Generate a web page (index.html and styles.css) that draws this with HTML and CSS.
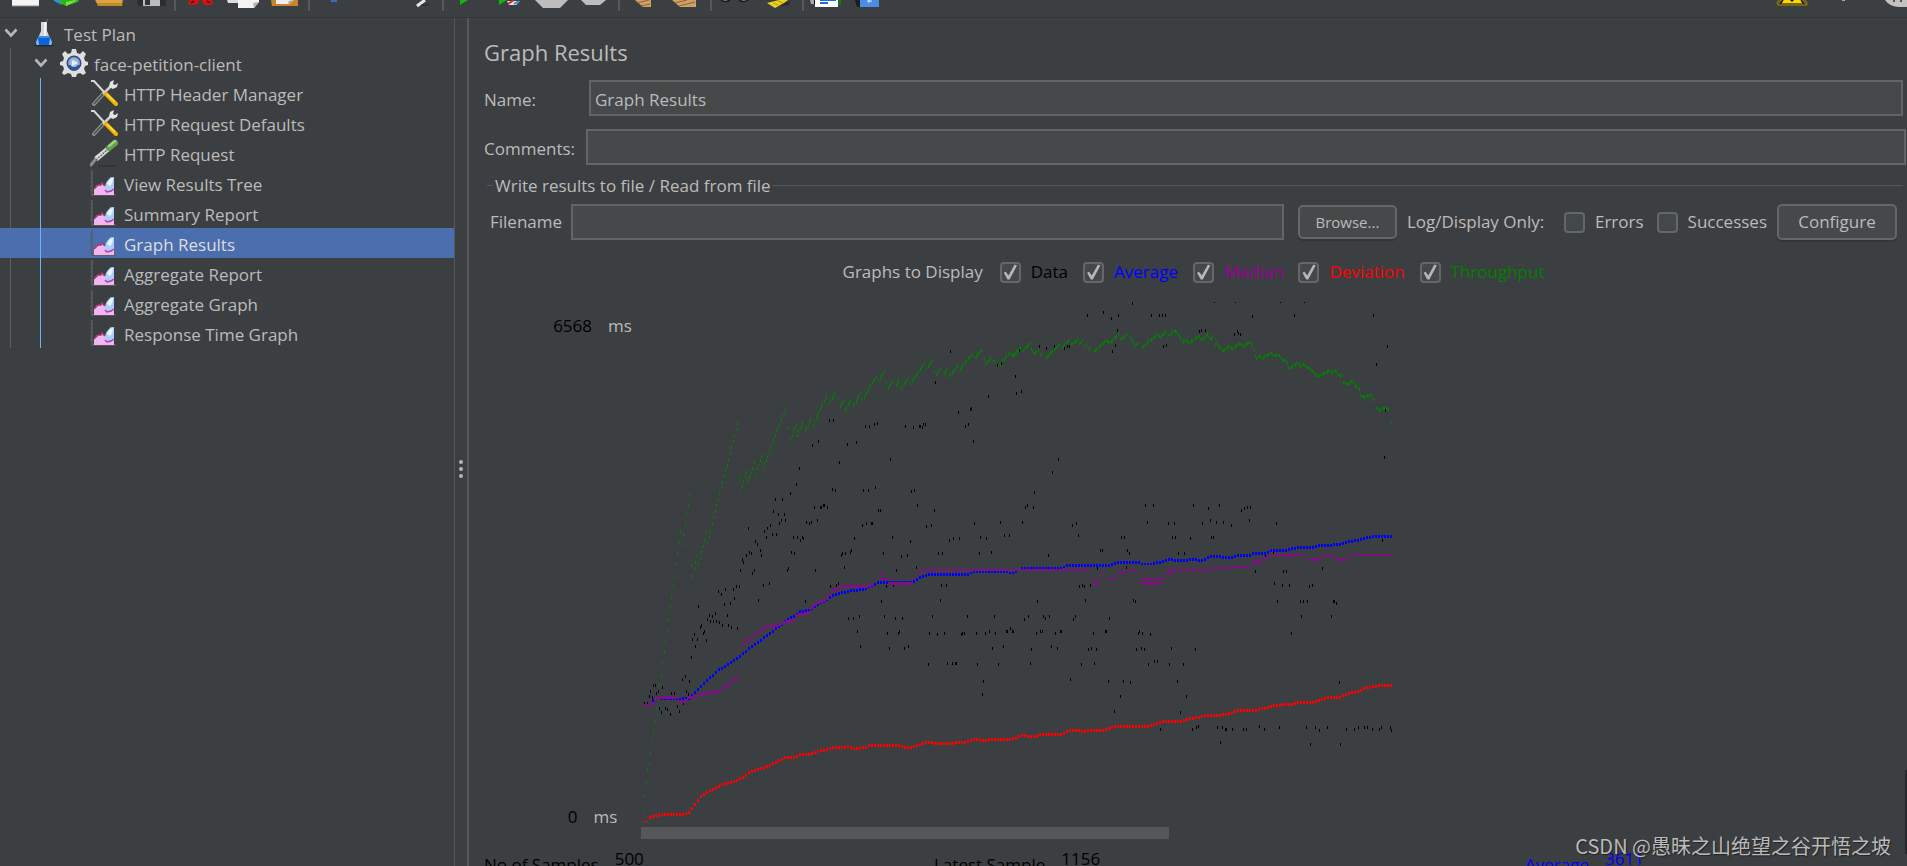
FILE: index.html
```html
<!DOCTYPE html>
<html lang="en">
<head>
<meta charset="utf-8">
<title>Graph Results</title>
<link rel="stylesheet" href="styles.css">
</head>
<body>
<svg class="defs" aria-hidden="true">
  <symbol id="i-chevron" viewBox="0 0 14 10"><path d="M1.5 1.5 7 7.5l5.500-6" fill="none" stroke="#b4b6b8" stroke-width="2.600"/></symbol>
  <symbol id="i-flask" viewBox="0 0 28 28">
    <ellipse cx="14" cy="26.500" rx="10" ry="1" fill="#25282a"/>
    <path d="M16 4 17.500 0" stroke="#777" stroke-width="1"/>
    <path d="M11 3h6v9l5 12q0 2-2 2H8q-2 0-2-2l5-12z" fill="#d3d7da"/>
    <path d="M14 3h2v22h-2z" fill="#f2f4f6"/>
    <path d="M9 17h10l3 7q0 2-2 2H8q-2 0-2-2z" fill="#0a64d8"/>
    <path d="M6 23l2-4 1 7H7zM22 23l-2-4-1 7h2z" fill="#8bbcf0"/>
    <path d="M9 17h10l1 2H8z" fill="#3a8df0"/>
  </symbol>
  <symbol id="i-gear" viewBox="0 0 28 28">
    <path d="M12 0h4l1 4 3 1 3-3 3 3-2 4 1 3 3 1v3l-3 1-1 3 2 4-3 2-3-2-3 1-1 3h-4l-1-3-3-1-4 2-2-2 2-4-1-3-3-1v-3l3-1 1-3-2-4 3-3 3 3 3-1z" fill="#dedede"/>
    <circle cx="14" cy="14" r="7.500" fill="#2a4a84"/>
    <circle cx="14" cy="14" r="6" fill="#86a5d2"/>
    <path d="M8 16a6 6 0 0 0 12 0z" fill="#2e5598"/>
    <circle cx="14" cy="14" r="4" fill="#a9bfdd"/>
    <path d="M12 11l6 3-6 3z" fill="#e8eef8"/>
  </symbol>
  <symbol id="i-tools" viewBox="0 0 28 28">
    <path d="M14 14 4 25" stroke="#8e8e8e" stroke-width="4" stroke-linecap="round"/>
    <path d="M14 14 4 25" stroke="#4b4d4e" stroke-width="1.500"/>
    <path d="M13 15 22 6" stroke="#cfcfcf" stroke-width="2.500"/>
    <path d="M19 8l1-5 4-2-1 4 2 1 3-2-1 4-4 2z" fill="#e4e4e4"/>
    <path d="M1 2l3 0 11 12" fill="none" stroke="#d8d8d8" stroke-width="2"/>
    <path d="M16 15 26 25" stroke="#f3b400" stroke-width="4" stroke-linecap="round"/>
    <path d="M17 15 25 23" stroke="#ffdc50" stroke-width="1.200"/>
  </symbol>
  <symbol id="i-dropper" viewBox="0 0 28 28">
    <path d="M8 27h18" stroke="#2a2c2d" stroke-width="1"/>
    <path d="M1 26 8 17" stroke="#8b8b8b" stroke-width="3" stroke-linecap="round"/>
    <path d="M6 20 18 10" stroke="#d8d8d8" stroke-width="5"/>
    <path d="M6 21 17 11" stroke="#6a6a6a" stroke-width="1.300" stroke-dasharray="2 1"/>
    <path d="M19 9 25 4" stroke="#5fa14b" stroke-width="6" stroke-linecap="round"/>
    <path d="M19 7 25 2" stroke="#9ad280" stroke-width="2.500" stroke-linecap="round"/>
  </symbol>
  <symbol id="i-graph" viewBox="0 0 28 28">
    <path d="M2 1V26H26" fill="none" stroke="#5b5e60" stroke-width="1.500"/>
    <path d="M0 5h2M0 9h2M0 13h2M0 17h2M0 21h2" stroke="#5b5e60"/>
    <path d="M20 8h4v17h-4z" fill="#9a92a6"/>
    <path d="M4 26V20l3-4h3l2-2 2 3h10v9z" fill="#f3b4f2"/>
    <path d="M4 20l4-4h3l1-2 3 3" fill="none" stroke="#a33a66" stroke-width="1.500"/>
    <path d="M24 8q-5 0-8 6-2 6 1 8h4q3-1 3-4z" fill="#a9cff8"/>
    <path d="M23 9q-4 0-6 6l3 2q3-3 3-8z" fill="#e6f4ff"/>
    <path d="M15 21l2 2 4-1 3-2" fill="none" stroke="#b040a0" stroke-width="1.500"/>
  </symbol>
</svg>

<header class="toolbar">
  <button class="tool" aria-label="New"><svg viewBox="0 0 42 17"><path d="M9 0h27v6H9z" fill="#f4f4f4"/><path d="M9 6h27" stroke="#8a8a80"/></svg></button>
  <button class="tool" aria-label="Templates"><svg viewBox="0 0 42 17"><path d="M9 0h8v5L9 1z" fill="#2296e0"/><path d="M15 0h19l-1 2-12 4-6-3z" fill="#2fb418"/><path d="M21 2l10-2v1L21 6z" fill="#7be04a"/></svg></button>
  <button class="tool" aria-label="Open"><svg viewBox="0 0 42 17"><path d="M8 0h28l-1 6H11z" fill="#c08a28"/><path d="M9 0h26v3H10z" fill="#dca544"/></svg></button>
  <button class="tool" aria-label="Save"><svg viewBox="0 0 42 17"><path d="M8 0h29v6H10L8 4z" fill="#2b2d2f"/><path d="M14 0h17v6H14z" fill="#b9bcc0"/><path d="M16 0h5v5h-5z" fill="#303234"/></svg></button>
  <span class="sep"></span>
  <button class="tool" aria-label="Cut"><svg viewBox="0 0 42 17"><path d="M9 3q1-4 6-3l5 0q0 5-6 5-4 0-5-2zM34 3q-1-4-6-3l-5 0q0 5 6 5 4 0 5-2z" fill="#dc1010"/><path d="M12 3l3-2M31 3l-3-2" stroke="#5a1010" stroke-width="2"/></svg></button>
  <button class="tool" aria-label="Copy"><svg viewBox="0 0 42 17"><path d="M6 0h15v3H7z" fill="#dcdcdc"/><path d="M17 0h21v2l-5 6H17z" fill="#f3f3f3"/><path d="M33 8l5-6-6 1z" fill="#b4b4b4"/></svg></button>
  <button class="tool" aria-label="Paste"><svg viewBox="0 0 42 17"><path d="M8 0h27v6H9z" fill="#c9832a"/><path d="M13 0h18l-5 4H13z" fill="#efefef"/><path d="M25 4l1-3 5-1z" fill="#9aa0a4"/></svg></button>
  <span class="sep"></span>
  <button class="tool" aria-label="Expand all"><svg viewBox="0 0 42 17"><path d="M18 0h6v2h-6z" fill="#2f6fc4"/></svg></button>
  <button class="tool" aria-label="Collapse all"></button>
  <button class="tool" aria-label="Toggle"><svg viewBox="0 0 42 17"><path d="M28 0 20 6" stroke="#e8e8e8" stroke-width="3"/><path d="M24 5q4 1 8-1" stroke="#26292b" fill="none"/></svg></button>
  <span class="sep"></span>
  <button class="tool" aria-label="Start"><svg viewBox="0 0 42 17"><path d="M13 0h8l-8 5z" fill="#0fb414"/></svg></button>
  <button class="tool" aria-label="Start no pauses"><svg viewBox="0 0 42 17"><path d="M10 0h8l-8 5z" fill="#0fb414"/><path d="M18 1h13l-4 4h-7z" fill="#dfe8f2"/><path d="M19 4l6-4" stroke="#d42a20" stroke-width="2"/><path d="M25 4l5-3" stroke="#3a78c8" stroke-width="2"/></svg></button>
  <button class="tool" aria-label="Stop"><svg viewBox="0 0 42 17"><path d="M4 0h33l-8 8H12z" fill="#bdbdbd"/></svg></button>
  <button class="tool" aria-label="Shutdown"><svg viewBox="0 0 42 17"><path d="M8 0h25l-6 5H13z" fill="#bdbdbd"/></svg></button>
  <span class="sep"></span>
  <button class="tool" aria-label="Clear"><svg viewBox="0 0 42 17"><path d="M12 0h16v7h-8z" fill="#d0a068"/><path d="M14 3l12-3M18 6l9-2" stroke="#8c6234"/></svg></button>
  <button class="tool" aria-label="Clear all"><svg viewBox="0 0 42 17"><path d="M7 0h24v7H15z" fill="#d0a068"/><path d="M10 3l12-3M14 6l16-4" stroke="#8c6234"/></svg></button>
  <span class="sep"></span>
  <button class="tool" aria-label="Search"><svg viewBox="0 0 42 17"><path d="M6 0q4 3 9 0M24 0q5 3 9 0" fill="#a9988c" stroke="#151719" stroke-width="1.500"/></svg></button>
  <button class="tool" aria-label="Reset search"><svg viewBox="0 0 42 17"><path d="M14 7l18-2 1-4z" fill="#292b2d"/><path d="M10 3 22 0h9l-4 3-9 5z" fill="#ecd21c"/><path d="M16 3l5 2M21 1l5 2" stroke="#a8920a"/></svg></button>
  <span class="sep"></span>
  <button class="tool" aria-label="Function helper"><svg viewBox="0 0 42 17"><path d="M3 0h8v4H4z" fill="#a6a8aa"/><path d="M7 0h2v4H7z" fill="#111"/><path d="M30 0h4v5h-4z" fill="#0b7a18"/><path d="M8 0h23v7H8z" fill="#fff"/><path d="M13 0h16M13 3h8" stroke="#1c6ee0" stroke-width="2"/></svg></button>
  <button class="tool" aria-label="Help"><svg viewBox="0 0 42 17"><path d="M6 0h6v7H8z" fill="#1a1c20"/><path d="M11 0h19v7H11z" fill="#4b8ce4"/><path d="M20 0v3M18 1h5" stroke="#d8e8ff"/></svg></button>
  <span class="spring"></span>
  <button class="tool" aria-label="Log viewer"><svg viewBox="0 0 42 17"><path d="M5 3l2-3h28l2 3-1 3H7z" fill="#75661e"/><path d="M9 3l2-3h20l2 3z" fill="#fbd800"/><path d="M9 4l3-4M33 4l-3-4" stroke="#17130a" stroke-width="1.500"/><path d="M19 0h4l-2 2z" fill="#17130a"/></svg></button>
  <svg class="clock" viewBox="0 0 52 17"><path d="M29 0h3v1h-3z" fill="#a4a6a8"/></svg>
  <button class="tool" aria-label="Server status"><svg viewBox="0 0 42 17"><path d="M20 0h22v7h-8q-9 0-14-7z" fill="#c2c2c2"/><path d="M28 0h2v2h-2zM35 0h2v2h-2z" fill="#555"/></svg></button>
</header>

<div class="workspace">
  <nav class="tree" aria-label="Test plan">
    <a href="#" class="node root"><svg class="chev"><use href="#i-chevron"/></svg><svg class="icon"><use href="#i-flask"/></svg>Test Plan</a>
    <div class="branch outer">
      <a href="#" class="node group"><svg class="chev"><use href="#i-chevron"/></svg><svg class="icon"><use href="#i-gear"/></svg>face-petition-client</a>
      <div class="branch inner">
        <a href="#" class="node leaf"><svg class="icon"><use href="#i-tools"/></svg>HTTP Header Manager</a>
        <a href="#" class="node leaf"><svg class="icon"><use href="#i-tools"/></svg>HTTP Request Defaults</a>
        <a href="#" class="node leaf"><svg class="icon"><use href="#i-dropper"/></svg>HTTP Request</a>
        <a href="#" class="node leaf"><svg class="icon"><use href="#i-graph"/></svg>View Results Tree</a>
        <a href="#" class="node leaf"><svg class="icon"><use href="#i-graph"/></svg>Summary Report</a>
        <a href="#" class="node leaf selected" aria-current="true"><svg class="icon"><use href="#i-graph"/></svg>Graph Results</a>
        <a href="#" class="node leaf"><svg class="icon"><use href="#i-graph"/></svg>Aggregate Report</a>
        <a href="#" class="node leaf"><svg class="icon"><use href="#i-graph"/></svg>Aggregate Graph</a>
        <a href="#" class="node leaf"><svg class="icon"><use href="#i-graph"/></svg>Response Time Graph</a>
      </div>
    </div>
  </nav>
  <div class="divider"><i></i><i></i><i></i></div>

  <main class="panel">
    <h1>Graph Results</h1>
    <div class="field name"><label for="name">Name:</label><input id="name" type="text" value="Graph Results"></div>
    <div class="field comments"><label for="comments">Comments:</label><input id="comments" type="text"></div>

    <fieldset class="file">
      <legend>Write results to file / Read from file</legend>
      <label for="filename">Filename</label>
      <input id="filename" type="text">
      <button class="btn browse">Browse...</button>
      <span class="only">Log/Display Only:</span>
      <label class="check"><input type="checkbox">Errors</label>
      <label class="check"><input type="checkbox">Successes</label>
      <button class="btn configure">Configure</button>
    </fieldset>

    <div class="series">
      <span>Graphs to Display</span>
      <label class="check data"><input type="checkbox" checked>Data</label>
      <label class="check average"><input type="checkbox" checked>Average</label>
      <label class="check median"><input type="checkbox" checked>Median</label>
      <label class="check deviation"><input type="checkbox" checked>Deviation</label>
      <label class="check throughput"><input type="checkbox" checked>Throughput</label>
    </div>

    <div class="graph">
      <div class="axis">
        <div><span class="value">6568</span><span>ms</span></div>
        <div><span class="value">0</span><span>ms</span></div>
      </div>
      <div class="plot">
        <svg id="chart" viewBox="0 0 760 527" role="img" aria-label="Response time graph"></svg>
        <div class="scroll"></div>
      </div>
    </div>

    <dl class="stats">
      <div><dt>No of Samples</dt><dd>500</dd></div>
      <div><dt>Latest Sample</dt><dd>1156</dd></div>
      <div class="average"><dt>Average</dt><dd>3611</dd></div>
    </dl>
  </main>
</div>
<div class="thumb"></div>
<div class="credit">CSDN @愚昧之山绝望之谷开悟之坡</div>
<script src="chart.js"></script>
</body>
</html>
```
FILE: styles.css
```css
* { box-sizing: border-box; }
body {
  margin: 0;
  height: 100vh;
  overflow: hidden;
  display: flex;
  flex-direction: column;
  background: #3c3f41;
  color: #bbbbbb;
  font: 17px/24px "Open Sans", "Noto Sans", sans-serif;
}
button, input { font: inherit; color: inherit; }
.defs { display: none; }

.toolbar {
  display: flex;
  flex: none;
  height: 18px;
  padding-left: 3px;
  border-bottom: 1px solid #323537;
}
.tool { width: 42px; height: 17px; padding: 0; border: 0; background: none; flex: none; }
.tool svg { display: block; width: 42px; height: 17px; }
.sep { width: 2px; height: 11px; margin: 0 3px; background: #555759; }
.spring { flex: 1; }
.clock { width: 52px; height: 17px; flex: none; }

.workspace { flex: 1; display: flex; min-height: 0; }
.tree { width: 455px; flex: none; border-right: 1px solid #555759; }
.node {
  display: flex;
  align-items: center;
  height: 30px;
  padding-top: 3px;
  color: inherit;
  text-decoration: none;
}
.node .icon { width: 28px; height: 28px; margin: 0 6px 3px 0; flex: none; }
.chev { width: 14px; height: 10px; margin: 0 12px 3px 0; flex: none; }
.root { padding-left: 4px; }
.group { padding-left: 34px; }
.leaf { padding-left: 90px; }
.selected { background: #4b6eaf; color: #dddddd; }
.branch { position: relative; }
.branch::before { content: ""; position: absolute; top: 0; bottom: 0; width: 1px; }
.outer::before { left: 10px; background: #5c5e60; }
.inner::before { left: 40px; background: #6cb4f8; }

.divider {
  width: 14px;
  flex: none;
  display: flex;
  flex-direction: column;
  align-items: center;
  justify-content: center;
  gap: 3px;
  padding-top: 54px;
  border-right: 2px solid #555759;
}
.divider i { width: 4px; height: 4px; border-radius: 50%; background: #b4b6b8; }

.panel { flex: 1; min-width: 0; display: flex; flex-direction: column; padding-left: 15px; }
h1 { margin: 17px 0 11px; font-size: 22px; line-height: 34px; font-weight: 400; }
input[type="text"] {
  flex: 1;
  min-width: 0;
  height: 36px;
  padding: 2px 4px 0;
  border: 2px solid #646464;
  background: #45494a;
  outline: 0;
}
.field { display: flex; align-items: center; }
.field label { padding-top: 3px; }
.name { margin-bottom: 13px; padding-right: 4px; }
.name label { width: 105px; }
.comments { padding-right: 1px; }
.comments label { width: 102px; }
.file {
  display: flex;
  align-items: center;
  margin: 9px 4px 0 3px;
  padding: 6px 6px 0 3px;
  border: 0;
  position: relative;
  min-width: 0;
}
.file::before {
  content: "";
  position: absolute;
  left: 0;
  right: 0;
  top: -13px;
  border-top: 1px solid #555759;
}
.file legend { position: relative; z-index: 1; margin-left: 3px; padding: 0 2px; background: #3c3f41; }
.file > label:first-of-type { width: 81px; }
.btn {
  border: 2px solid #646668;
  border-radius: 5px;
  background: #45494a;
  box-shadow: 0 2px 1px #333638;
  padding: 0;
}
.browse { width: 99px; height: 34px; margin: 0 10px 0 14px; font-size: 15px; line-height: 20px; }
.configure { width: 120px; height: 36px; margin-left: 10px; }
.only { width: 157px; white-space: nowrap; }
.check { display: flex; align-items: center; gap: 10px; }
.check + .check { margin-left: 13px; }
.check input {
  appearance: none;
  width: 21px;
  height: 21px;
  margin: 0;
  border: 2px solid #646668;
  border-radius: 4px;
  background: #43494a;
}
.check input:checked::before {
  content: "";
  display: block;
  width: 17px;
  height: 17px;
  background: #b4b6b8;
  clip-path: polygon(12% 55%, 24% 48%, 40% 70%, 76% 6%, 90% 12%, 46% 94%, 34% 94%);
}
.series { display: flex; justify-content: center; align-items: center; height: 30px; margin-top: 20px; padding-right: 4px; }
.series > span { margin-right: 17px; }
.series .check + .check { margin-left: 15px; }
.data, .value, .stats { color: #000000; }
.average, .stats .average { color: #0000ff; }
.median { color: #990099; }
.deviation { color: #ff0000; }
.throughput { color: #008000; }

.graph { display: flex; margin-top: 16px; }
.axis {
  width: 157px;
  flex: none;
  padding: 14px 0 10px 60px;
  display: flex;
  flex-direction: column;
  justify-content: space-between;
}
.axis div { display: flex; justify-content: center; gap: 16px; }
.plot svg { display: block; width: 760px; height: 527px; }
.scroll { width: 528px; height: 12px; background: #565758; }

.stats { display: flex; margin: 8px 0 0; flex: none; }
.stats div { display: flex; flex: none; width: 450px; gap: 16px; }
.stats div:nth-child(2) { width: 591px; }
.stats .average { width: auto; }
.stats dt { padding-top: 6px; }
.stats dd { margin: 0; }

.thumb { position: absolute; right: 0; top: 770px; width: 2px; height: 84px; background: #25282c; }
.credit {
  position: absolute;
  right: 16px;
  bottom: 6px;
  color: #b9babb;
  font: 20px/28px "Noto Sans CJK SC", sans-serif;
  text-shadow: 1px 1px 1px #222;
}
```
FILE: chart.js
```javascript
// Samples are stored per tile, in thirds of a pixel; each tile has its own origin.
const tiles = {
  a: [-21, -20],
  b: [369, -20],
  c: [-21, 260],
  d: [369, 260]
};
const svg = document.getElementById("chart");

function parse(text) {
  return text.trim().split(/\s+/).map(p => p.split(",").map(Number));
}

function marks(tile, points, w, h) {
  const [ox, oy] = tiles[tile];
  return points.map(([x, y]) => {
    const px = Math.round(ox + x / 3 - w / 2);
    const py = Math.round(oy + y / 3 - h / 2);
    return `M${px} ${py}h${w}v${h}h-${w}z`;
  }).join("");
}

function along(points, step) {
  const out = [];
  for (let i = 0; i < points.length - 1; i++) {
    const [x0, y0] = points[i];
    const [x1, y1] = points[i + 1];
    for (let x = Math.ceil(x0 / step) * step; x < x1; x += step) {
      out.push([x, y0 + (y1 - y0) * (x - x0) / (x1 - x0)]);
    }
  }
  return out;
}

function draw(color, d) {
  const path = document.createElementNS("http://www.w3.org/2000/svg", "path");
  path.setAttribute("fill", color);
  path.setAttribute("d", d);
  svg.appendChild(path);
}

function lines(color, w, h, step, data) {
  draw(color, data.map(([tile, text]) =>
    text.split("|").map(run => marks(tile, along(parse(run), step), w, h)).join("")).join(""));
}

function dots(color, w, h, data) {
  draw(color, data.map(([tile, text]) => marks(tile, parse(text), w, h)).join(""));
}

dots("#008000", 1, 3, [
  ["c", "70,750 73,709 79,669 82,629 88,610 91,579 97,543 100,511 106,480 109,444 115,412 118,376 124,345 127,309 133,277 136,246 142,210 145,178 151,142 154,111 160,79 163,48 169,12 214,16 217,48 223,25 226,7 235,12"],
  ["a", "169,852 172,820 178,789 181,753 187,793 190,762 196,735 199,703 205,676 208,645 214,857 223,865 226,847 232,829 235,852 241,834 244,816 250,798 253,780 259,757 262,789 268,771 271,753 277,730 280,712 286,694 289,676 295,658 298,640 304,622 307,608 313,586 316,568 322,555 325,537 331,519 334,501 340,483 343,465 349,447 352,429 358,591 361,631 367,618 370,604 376,591 379,577 385,600 388,591 394,577 397,564 403,546 406,582 412,568 415,555 421,541 424,528 430,564 433,550 439,541 442,528 448,514 451,501 457,487 460,478 466,465 469,451 475,442 478,433 484,420 487,406 493,397 496,384"]
]);
lines("#008000", 1, 3, 4, [
  ["a", "502,451 505,442|511,478 529,433|532,465 550,424|556,451 574,415|577,442 604,379 622,343|628,370 646,334|649,361 655,357|658,384 673,361|676,388 694,357|700,379 721,339|727,361 757,307 772,289|775,302 793,275|799,302 802,330|802,330 820,298|826,321 838,302|844,325 865,293|871,313 914,249|919,266 937,240|943,266 946,289|946,289 964,262|970,284 982,266|988,289 1015,253|1018,271 1045,235 1060,221|1063,235 1087,208|1090,231 1096,253 1114,231|1117,248 1126,240|1132,262 1170,216|1177,231 1198,205"],
  ["b", "1,217 7,231 34,199|37,213 61,190|64,208 73,222 85,210|91,226 100,217|106,235 151,190|154,204 178,181|181,195 205,177|208,190 217,181|223,199 232,190|235,208 244,199|250,217 289,181 298,190 325,163|331,181 352,159|358,168 367,181 376,199 388,186|394,204 442,163 451,172 469,154|475,168 493,150 502,159 520,186 526,177 535,190 568,168 573,181 592,163 601,177 610,168|613,195 619,190 637,213 658,199 667,208 688,190 700,199 718,186 727,195 739,235 748,226 757,235 784,217 790,226 808,226 817,240 829,244 838,266 862,249 872,258 880,253 892,262 901,267 916,284 928,289 958,271 964,280 973,271 991,289 997,285|1000,307 1012,312 1027,303 1037,320 1043,316|1043,325 1049,329|1052,348 1064,352 1080,343 1089,360 1096,357|1099,384 1108,392 1117,384 1130,384 1137,388|1141,425 1146,434"]
]);
dots("#000000", 1, 3, [
  ["a", "991,213 946,307 1186,289 1189,339 1105,348 1015,397 1054,384 1051,388 628,420 640,420 736,438 748,438 763,433 772,429 856,438 880,442 899,438 902,438 907,442 910,433 916,433 1036,438 1045,433 1060,483 595,483 577,496 682,492 709,487 811,537 658,546 538,564 529,613 511,640 466,658 487,658 637,627 646,631 730,631 745,631 766,622 874,635 883,631 583,681 602,681 605,681 611,677 614,677 621,681 775,690 781,690 892,676 943,690 460,694 475,703 493,703 484,721 496,721 478,730 451,735 442,744 433,753 385,744 559,726 568,730 574,726 592,721 727,735 739,730 754,730 757,730 919,739 934,735 1063,730 1141,726 457,762 469,762 439,771 520,771 532,771 541,780 547,771 550,775 703,775 817,771 871,784 988,780 1000,775 1018,775 1081,771 1099,775 1153,766 1168,766 406,784 412,793 421,811 424,825 388,816 394,820 379,825 367,838 370,847 514,816 523,820 664,825 667,820 676,820 691,816 694,811 790,820 844,829 862,825 955,820 967,820 1078,820 1114,816 1132,257 1144,249 1198,210"],
  ["b", "367,69 232,105 280,96 304,114 325,105 424,105 448,105 457,105 466,105 727,109 853,105 1090,105 322,150 568,155 574,150 586,150 673,163 682,154 685,159 691,163 316,195 307,213 88,199 109,204 133,199 163,204 172,199 178,199 28,210 460,199 469,195 1132,199 1099,253 1126,390 16,289 19,339 34,334 145,537 127,577 73,636 46,681 52,676 70,681 406,676 430,676 550,676 595,685 628,676 694,690 703,685 712,681 721,681 37,726 187,735 199,730 412,726 475,730 493,730 577,730 601,721 619,726 640,726 664,735 718,721 799,730 205,766 334,771 343,771 487,771 496,771 541,775 604,771 610,771 1117,780 1123,532 271,811 277,811 352,811 358,820 505,820 523,820 790,820 115,825 766,825"],
  ["c", "370,7 361,30 403,30 397,39 502,30 505,25 586,30 673,21 829,30 889,21 430,75 448,70 358,79 349,79 340,88 316,88 295,93 304,102 415,120 556,124 631,79 649,75 655,70 799,79 964,75 979,75 820,75 784,124 961,120 235,138 313,133 331,129 343,115 268,165 277,169 286,160 322,165 262,178 271,183 280,183 289,183 298,187 307,196 325,196 334,201 352,205 241,201 244,196 250,219 253,214 223,223 217,237 232,237 259,241 226,259 214,291 685,174 700,174 718,169 793,169 826,174 847,174 937,169 1042,169 1123,169 712,214 802,219 835,219 838,214 928,219 952,223 973,219 1024,223 1027,219 1033,219 1069,219 1096,219 1108,214 1126,219 1159,214 1162,214 1171,205 1178,214 1181,214 721,259 808,264 853,264 865,259 1117,264 1150,259 925,313 982,309 997,309 1006,309 1009,309 1072,313 1135,313 1090,363 1087,403 196,349 187,358 208,363 100,376 106,376 127,381 91,394 115,394 109,399 88,408 97,412 154,399 163,399 199,394 205,403 73,430 82,430 118,444 136,444 142,448 124,457 151,462 172,439 178,453 190,430"],
  ["d", "1,205 7,214 10,214 349,21 262,25 736,34 820,34 829,34 937,25 208,79 217,75 223,79 241,75 793,70 817,75 838,75 898,79 907,75 82,124 226,120 370,120 376,124 802,124 871,124 880,124 892,124 970,124 973,124 979,129 43,178 55,169 100,169 106,174 118,169 190,178 196,169 298,174 874,169 964,169 79,219 91,214 97,214 136,219 151,214 154,214 250,219 286,214 289,214 385,219 388,214 397,219 421,223 844,219 64,268 124,259 142,264 235,268 244,264 259,268 379,268 394,264 403,268 484,264 556,268 61,309 214,313 253,309 415,313 433,304 442,304 478,313 520,313 181,358 295,363 340,363 361,367 502,363 988,367 331,408 529,408 313,453 511,457 451,507 547,507 559,502 565,498 622,502 637,502 646,507 649,507 667,507 700,507 709,507 748,498 763,507 808,502 889,502 916,502 928,511 952,502 1009,507 1033,507 1045,502 1063,502 1072,502 1087,507 1108,507 1114,502 1141,502 1144,511 631,547 901,552 991,552"]
]);
dots("#000000", 1, 1, [["b", "613,67 676,67 811,67 883,67"]]);
lines("#0000ff", 2, 3, 9, [
  ["c", "91,421 100,421|124,416 172,416 181,420 190,416 205,416 220,403 250,371 295,331 325,313 350,296 385,268 430,235 460,213 475,201 505,177 525,168 541,155 568,151 580,142 610,125 635,109 655,100 690,93 730,88 760,75 775,66 880,66 905,50 925,45 1045,43"],
  ["b", "460,845 470,839 535,842 540,838 580,842 590,834 610,829 665,834 680,825 725,825 730,820 770,820 780,811 830,811 860,803 915,802 925,798 995,793 1020,785 1050,779 1060,775 1080,771 1148,770"],
  ["d", "170,16 300,16 322,7 395,7|430,10 435,8 460,5"]
]);
lines("#0000ff", 2, 2, 9, [
  ["c", "1045,43 1060,36 1170,37"],
  ["d", "0,38 20,37 35,24 155,24 170,16|395,12 435,12"]
]);
lines("#990099", 2, 2, 9, [
  ["c", "70,434 85,434|240,403 260,399|775,57 815,57|882,57 891,39 900,30 1170,30"],
  ["d", "0,30 225,30 243,38|247,57 262,70|270,57 276,57|278,38 288,38|290,57 318,57|323,39 345,39 350,30 375,30 385,39|390,57 460,57|466,38 488,38|475,30 605,30 612,25 680,25 685,20 722,20"],
  ["b", "745,840 765,838 775,829 785,825 890,825|820,829 850,829|930,829 975,829|1015,829 1025,825 1148,825"]
]);
lines("#990099", 2, 3, 9, [
  ["c", "88,430 104,430|107,412 172,412 180,425 198,421 205,412 225,412 240,403|240,403 300,394 310,380 325,376 335,362 355,349|366,259 378,240 400,237 405,223 420,215 435,201 475,196 490,187 520,182 530,168 545,163 566,160 575,142 590,130 620,118 632,102 640,91 665,79 735,79 765,70|780,39 790,39|803,70 875,70"],
  ["d", "250,70 264,70|396,70 455,70"],
  ["b", "728,847 748,847|898,838 935,838|975,838 1012,838"]
]);
lines("#ff0000", 2, 1, 9, [["c", "70,785 85,785"]]);
lines("#ff0000", 2, 3, 9, [
  ["c", "88,774 91,772 106,768 120,767 127,763 190,763 210,758 220,737 232,728 236,714 255,701 270,692 305,674 345,664 370,652 390,636 430,625 465,608 495,593 525,592 540,583 575,582 595,574 615,571 640,562 680,564 685,560 710,566 735,563 750,556 840,556 850,561 875,561 890,556 920,547 970,551 1040,547 1060,538 1095,542 1110,538 1170,538"],
  ["d", "0,538 20,534 35,525 50,529 80,529 90,524 155,524 175,512 210,511 220,516 235,511 275,511 300,506 320,498 415,498 440,492 465,484 510,484 530,480 545,475 570,473 590,466 635,466 680,453 735,452 770,443 790,436 840,434 865,426 910,426 950,414 990,412 1010,403 1040,395 1070,384 1105,377 1147,376"]
]);
```
